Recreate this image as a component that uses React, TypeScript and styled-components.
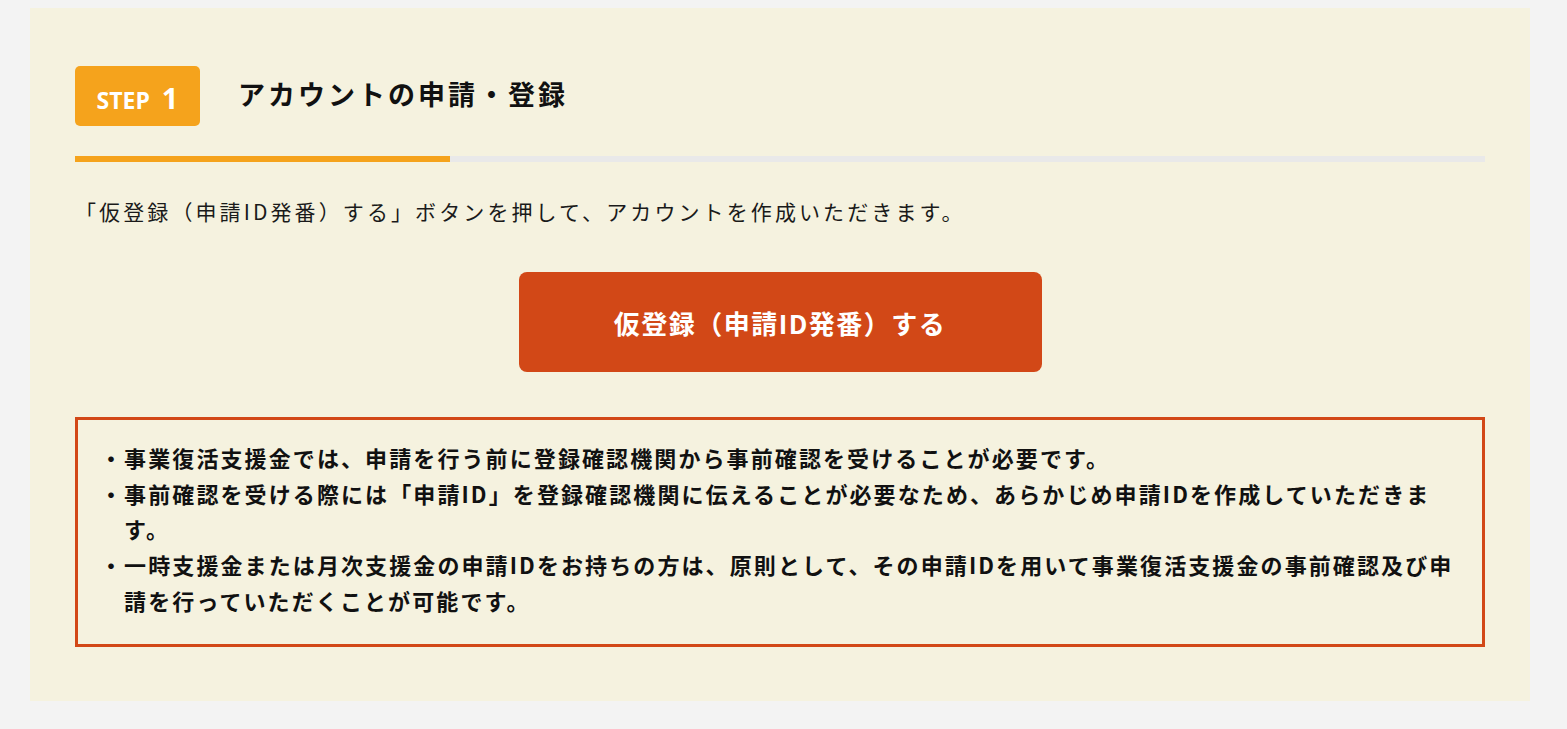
import React from "react";
import styled, { createGlobalStyle } from "styled-components";

const GlobalStyle = createGlobalStyle`
    body {
        margin: 0;
        background: #f3f3f3;
        font-family: "Noto Sans CJK JP", "Noto Sans", sans-serif;
        color: #1a1a1a;
    }
`;

const notes = [
    "事業復活支援金では、申請を行う前に登録確認機関から事前確認を受けることが必要です。",
    "事前確認を受ける際には「申請ID」を登録確認機関に伝えることが必要なため、あらかじめ申請IDを作成していただきます。",
    "一時支援金または月次支援金の申請IDをお持ちの方は、原則として、その申請IDを用いて事業復活支援金の事前確認及び申請を行っていただくことが可能です。",
];

export default function App() {
    return (
        <>
            <GlobalStyle />
            <Page>
                <Panel>
                    <Header>
                        <Badge>
                            <BadgeLabel>
                                <StepWord>STEP</StepWord>
                                <StepNumber>1</StepNumber>
                            </BadgeLabel>
                        </Badge>
                        <Title>アカウントの申請・登録</Title>
                    </Header>
                    <Progress>
                        <ProgressFill $ratio={375 / 1410} />
                    </Progress>
                    <Lead>
                        「仮登録（申請ID発番）する」ボタンを押して、アカウントを作成いただきます。
                    </Lead>
                    <ButtonRow>
                        <PrimaryButton type="button">
                            仮登録（申請ID発番）する
                        </PrimaryButton>
                    </ButtonRow>
                    <Notice>
                        <NoteList>
                            {notes.map((note) => (
                                <NoteItem key={note}>
                                    <Bullet>・</Bullet>
                                    <NoteText>{note}</NoteText>
                                </NoteItem>
                            ))}
                        </NoteList>
                    </Notice>
                </Panel>
            </Page>
        </>
    );
}

const Page = styled.div`
    padding: 8px 0 28px 30px;
`;

const Panel = styled.section`
    width: 1500px;
    box-sizing: border-box;
    background: #f5f2df;
    padding: 58px 45px 54px;
`;

const Header = styled.div`
    display: flex;
    align-items: center;
    gap: 38px;
`;

const Badge = styled.div`
    width: 125px;
    height: 60px;
    box-sizing: border-box;
    border-radius: 5px;
    background: #f5a31c;
    color: #fff;
    display: flex;
    align-items: center;
    justify-content: center;
`;

const BadgeLabel = styled.div`
    line-height: 1;
    padding-top: 2px;
    font-family: "Open Sans", sans-serif;
    font-weight: 700;
    white-space: nowrap;
`;

const StepWord = styled.span`
    font-size: 23px;
    margin-right: 12px;
`;

const StepNumber = styled.span`
    font-size: 29px;
`;

const Title = styled.h2`
    margin: 0;
    padding-bottom: 5px;
    font-size: 27px;
    font-weight: 700;
    letter-spacing: 3px;
    color: #111;
`;

const Progress = styled.div`
    margin-top: 30px;
    height: 6px;
    background: #e9e9e9;
`;

const ProgressFill = styled.div<{ $ratio: number }>`
    height: 100%;
    width: ${(p) => p.$ratio * 100}%;
    background: #f5a31c;
`;

const Lead = styled.p`
    margin: 31px 0 0;
    font-size: 21px;
    line-height: 36px;
    letter-spacing: 3.1px;
`;

const ButtonRow = styled.div`
    display: flex;
    justify-content: center;
    margin-top: 43px;
`;

const PrimaryButton = styled.button`
    width: 523px;
    height: 100px;
    border: none;
    border-radius: 8px;
    background: #d24817;
    color: #fff;
    font-family: inherit;
    font-size: 26px;
    font-weight: 700;
    letter-spacing: 1.5px;
    cursor: pointer;
`;

const Notice = styled.div`
    margin-top: 45px;
    border: 3px solid #d24817;
    padding: 20px 20px 25px 22px;
`;

const NoteList = styled.ul`
    list-style: none;
    margin: 0;
    padding: 0;
`;

const NoteItem = styled.li`
    display: flex;
    font-size: 22px;
    font-weight: 700;
    line-height: 35.7px;
    letter-spacing: 2.1px;
    color: #111;
`;

const Bullet = styled.span`
    flex: none;
`;

const NoteText = styled.span`
    flex: 1;
`;
